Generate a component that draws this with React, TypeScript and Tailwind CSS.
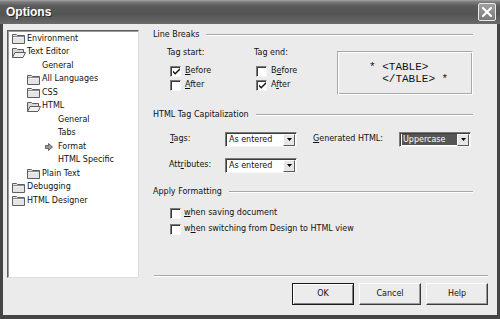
import React from "react";

const FolderClosed = () => (
  <svg width="13" height="11" viewBox="0 0 13 11" className="shrink-0">
    <path d="M0.5 10.5 V1.5 H4.5 L5.5 2.5 H12.5 V10.5 Z" fill="#e4e4e4" stroke="#5e5e5e" />
    <path d="M1.5 4 H11.5" stroke="#ffffff" />
    <path d="M1 3.5 H12" stroke="#8a8a8a" />
  </svg>
);

const FolderOpen = () => (
  <svg width="14" height="11" viewBox="0 0 14 11" className="shrink-0">
    <path d="M0.5 10.5 V1.5 H4.5 L5.5 2.5 H11.5 V5" fill="#d8d8d8" stroke="#5e5e5e" />
    <path d="M0.5 10.5 L3 5.5 H13.5 L11 10.5 Z" fill="#f0f0f0" stroke="#5e5e5e" />
  </svg>
);

const Arrow = () => (
  <svg width="8" height="8" viewBox="0 0 8 8" className="shrink-0">
    <path d="M0.5 2.5 H3.5 V0.5 L7.5 4 L3.5 7.5 V5.5 H0.5 Z" fill="#9a9a9a" stroke="#4a4a4a" strokeWidth="0.8" />
  </svg>
);

const Check = ({ checked }: { checked?: boolean }) => (
  <div className="w-[11px] h-[11px] shrink-0 bg-white border-t border-l border-t-[#7a7a7a] border-l-[#7a7a7a] border-r border-b border-r-[#f6f6f6] border-b-[#f6f6f6] shadow-[inset_1px_1px_0_#3c3c3c] flex items-center justify-center">
    {checked && (
      <svg width="7" height="7" viewBox="0 0 7 7" className="ml-[1px] mt-[1px]">
        <path d="M0 2.5 L0 4.5 L2.2 6.7 L7 1.9 L7 0 L2.2 4.8 Z" fill="#111" />
      </svg>
    )}
  </div>
);

const U = ({ children }: { children: React.ReactNode }) => <span className="underline underline-offset-[1px]">{children}</span>;

const Select = ({ value, highlight }: { value: string; highlight?: boolean }) => (
  <div className="w-[72px] h-[15px] bg-white border-t border-l border-t-[#7a7a7a] border-l-[#7a7a7a] border-r border-b border-r-[#f6f6f6] border-b-[#f6f6f6] shadow-[inset_1px_1px_0_#3c3c3c] flex items-center">
    <div className="flex-1 h-full flex items-center pl-[2px] pt-[1px]">
      <span className={highlight ? "bg-[#555555] text-white w-full h-[11px] flex items-center pl-[1px]" : "pl-[1px]"}>{value}</span>
    </div>
    <div className="w-[12px] h-[12px] mr-[1px] mt-[1px] bg-[#e6e6e6] border-t border-l border-t-white border-l-white border-r border-b border-r-[#5a5a5a] border-b-[#5a5a5a] flex items-center justify-center">
      <svg width="5" height="3" viewBox="0 0 5 3">
        <path d="M0 0 H5 L2.5 3 Z" fill="#000" />
      </svg>
    </div>
  </div>
);

const GroupHeader = ({ label }: { label: string }) => (
  <div className="h-[22px] flex items-center">
    <span className="whitespace-nowrap">{label}</span>
    <div className="flex-1 ml-[7px] h-[2px] border-t border-t-[#a8a8a8] border-b border-b-white" />
  </div>
);

const Btn = ({ label, def }: { label: string; def?: boolean }) => (
  <div
    className={
      "w-[62px] h-[22px] bg-[#ececec] flex items-center justify-center " +
      (def
        ? "border border-[#1a1a1a] shadow-[inset_1px_1px_0_#ffffff,inset_-1px_-1px_0_#808080]"
        : "border-t border-l border-t-white border-l-white border-r border-b border-r-[#3a3a3a] border-b-[#3a3a3a] shadow-[inset_-1px_-1px_0_#9a9a9a]")
    }
  >
    {label}
  </div>
);

type Item = { label: string; level: number; icon?: "closed" | "open" | "arrow" | "none" };

const items: Item[] = [
  { label: "Environment", level: 0, icon: "closed" },
  { label: "Text Editor", level: 0, icon: "open" },
  { label: "General", level: 1, icon: "none" },
  { label: "All Languages", level: 1, icon: "closed" },
  { label: "CSS", level: 1, icon: "closed" },
  { label: "HTML", level: 1, icon: "open" },
  { label: "General", level: 2, icon: "none" },
  { label: "Tabs", level: 2, icon: "none" },
  { label: "Format", level: 2, icon: "arrow" },
  { label: "HTML Specific", level: 2, icon: "none" },
  { label: "Plain Text", level: 1, icon: "closed" },
  { label: "Debugging", level: 0, icon: "closed" },
  { label: "HTML Designer", level: 0, icon: "closed" },
];

const TreeRow = ({ it }: { it: Item }) => {
  if (it.level === 2) {
    return (
      <div className="h-[13.5px] flex items-center pl-[37px]">
        <div className="w-[13px] flex items-center">{it.icon === "arrow" && <Arrow />}</div>
        <span className="whitespace-nowrap">{it.label}</span>
      </div>
    );
  }
  const pl = it.level === 0 ? "pl-[4px]" : "pl-[19px]";
  return (
    <div className={"h-[13.5px] flex items-center " + pl}>
      <div className="w-[15px] flex items-center">
        {it.icon === "closed" && <FolderClosed />}
        {it.icon === "open" && <FolderOpen />}
      </div>
      <span className="whitespace-nowrap">{it.label}</span>
    </div>
  );
};

export default function App() {
  return (
    <div className="w-[500px] h-[319px] bg-[#454545] flex flex-col font-['DejaVu_Sans',sans-serif] text-[8px] text-[#111] overflow-hidden">
      {/* Title bar */}
      <div className="h-[24px] shrink-0 flex items-center bg-[linear-gradient(to_bottom,#a4a4a4_0px,#7a7a7a_2px,#5a5a5a_6px,#545454_14px,#606060_20px,#6c6c6c_24px)]">
        <span className="ml-[6px] font-['Liberation_Sans',sans-serif] font-bold text-[12px] text-white [text-shadow:1px_1px_0_#2a2a2a]">Options</span>
        <div className="flex-1" />
        <div className="w-[18px] h-[18px] mr-[4px] rounded-[2px] border border-[#e8e8e8] bg-[linear-gradient(to_bottom,#a0a0a0,#7a7a7a)] flex items-center justify-center">
          <svg width="10" height="10" viewBox="0 0 10 10">
            <path d="M1 1 L9 9 M9 1 L1 9" stroke="#ffffff" strokeWidth="2" strokeLinecap="square" />
          </svg>
        </div>
      </div>
      {/* Body */}
      <div className="flex-1 mx-[3px] mb-[4px] bg-[#ebebeb] flex items-start">
        {/* Tree */}
        <div className="ml-[4px] mt-[6px] w-[135px] h-[248px] bg-white border-t border-l border-t-[#5e5e5e] border-l-[#5e5e5e] border-r border-b border-r-[#dcdcdc] border-b-[#dcdcdc] shadow-[inset_1px_1px_0_#9a9a9a] flex flex-col pt-[1px]">
          {items.map((it, i) => (
            <TreeRow key={i} it={it} />
          ))}
        </div>
        {/* Right */}
        <div className="flex-1 h-full flex flex-col pl-[14px] pr-[9px]">
          <div className="pr-[15px] flex flex-col">
            <GroupHeader label="Line Breaks" />
            <div className="flex">
              <div className="ml-[14px] w-[87px] flex flex-col">
                <div className="h-[14px] flex items-center">Tag start:</div>
                <div className="mt-[4px] h-[14px] flex items-center pl-[3px] gap-[4px]">
                  <Check checked />
                  <span><U>B</U>efore</span>
                </div>
                <div className="h-[14px] flex items-center pl-[3px] gap-[4px]">
                  <Check />
                  <span><U>A</U>fter</span>
                </div>
              </div>
              <div className="w-[83px] flex flex-col">
                <div className="h-[14px] flex items-center">Tag end:</div>
                <div className="mt-[4px] h-[14px] flex items-center pl-[2px] gap-[4px]">
                  <Check />
                  <span>B<U>e</U>fore</span>
                </div>
                <div className="h-[14px] flex items-center pl-[2px] gap-[4px]">
                  <Check checked />
                  <span>A<U>f</U>ter</span>
                </div>
              </div>
              <div className="mt-[5px] w-[136px] h-[44px] border border-t-[#a8a8a8] border-l-[#a8a8a8] border-r-white border-b-white shadow-[inset_1px_1px_0_#ffffff,inset_-1px_-1px_0_#a8a8a8] flex flex-col justify-center font-['Liberation_Mono',monospace] text-[11px] leading-[12px] pl-[31px]">
                <div className="whitespace-pre">{"* <TABLE>"}</div>
                <div className="whitespace-pre">{"  </TABLE> *"}</div>
              </div>
            </div>
            <div className="mt-[9px]">
              <GroupHeader label="HTML Tag Capitalization" />
            </div>
            <div className="mt-[5px] h-[16px] flex items-center">
              <div className="ml-[17px] w-[55px]"><U>T</U>ags:</div>
              <Select value="As entered" />
              <div className="ml-[16px] w-[86px]"><U>G</U>enerated HTML:</div>
              <Select value="Uppercase" highlight />
            </div>
            <div className="mt-[10px] h-[16px] flex items-center">
              <div className="ml-[16px] w-[56px]">Att<U>r</U>ibutes:</div>
              <Select value="As entered" />
            </div>
            <div className="mt-[8px]">
              <GroupHeader label="Apply Formatting" />
            </div>
            <div className="mt-[3px] h-[14px] flex items-center pl-[17px] gap-[3px]">
              <Check />
              <span><U>w</U>hen saving document</span>
            </div>
            <div className="mt-[2px] h-[14px] flex items-center pl-[17px] gap-[3px]">
              <Check />
              <span>w<U>h</U>en switching from Design to HTML view</span>
            </div>
          </div>
          <div className="flex-1" />
          <div className="ml-[1px] h-[2px] border-t border-t-[#a8a8a8] border-b border-b-white" />
          <div className="mt-[6px] mb-[10px] flex justify-end gap-[5px]">
            <Btn label="OK" def />
            <Btn label="Cancel" />
            <Btn label="Help" />
          </div>
        </div>
      </div>
    </div>
  );
}
